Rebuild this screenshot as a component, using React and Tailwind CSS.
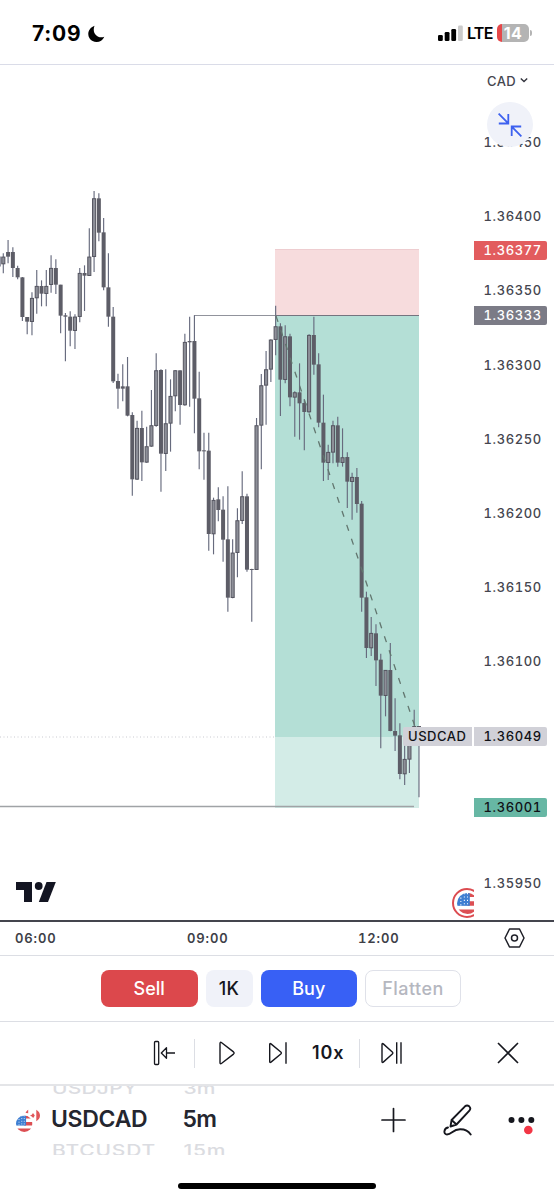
import React from 'react';

const STEP = 4.778;
const FIRST_X = 3.4;

// [high, open/close top, open/close bottom, low, rising]
const fromOrigin = (origin, rows) =>
  rows.map(([h, t, b, l, up]) => [origin + h / 3, origin + t / 3, origin + b / 3, origin + l / 3, up]);

const CANDLES = [
  ...fromOrigin(180, [
    [220, 230, 252, 280, 1], [180, 216, 230, 250, 0], [202, 216, 264, 291, 0], [257, 264, 292, 298, 0],
    [291, 292, 411, 423, 0], [411, 411, 425, 463, 0], [337, 354, 425, 466, 1], [270, 318, 354, 401, 1],
    [301, 318, 341, 379, 0], [270, 318, 341, 379, 1], [226, 264, 314, 338, 1], [238, 264, 314, 342, 0],
    [314, 314, 407, 460, 0], [399, 406, 410, 544, 0], [394, 410, 452, 499, 0], [403, 410, 452, 507, 1],
    [264, 279, 410, 427, 1], [256, 279, 287, 393, 0], [145, 230, 287, 287, 1], [33, 55, 230, 276, 1],
    [40, 55, 158, 184, 0], [114, 157, 322, 331, 0], [220, 322, 410, 440, 0], [381, 410, 604, 609, 0],
  ]),
  ...fromOrigin(280, [
    [281, 303, 326, 386, 0], [253, 319, 326, 364, 0], [231, 319, 407, 409, 0], [397, 405, 598, 647, 0],
    [422, 444, 598, 600, 1], [392, 444, 547, 603, 0], [440, 499, 547, 548, 1], [330, 436, 499, 500, 1],
    [220, 271, 437, 440, 1], [268, 270, 521, 635, 0], [268, 430, 521, 573, 1], [298, 348, 430, 515, 1],
    [271, 271, 348, 394, 1], [271, 271, 375, 434, 0], [161, 186, 375, 377, 1], [110, 183, 187, 380, 0],
    [106, 183, 356, 460, 0], [275, 355, 514, 568, 0], [458, 511, 514, 599, 0],
  ]),
  ...fromOrigin(400, [
    [98, 152, 402, 452, 0], [293, 300, 402, 463, 1], [262, 298, 330, 364, 0], [289, 329, 419, 485, 0],
    [259, 418, 593, 635, 0], [418, 458, 593, 595, 1], [325, 361, 458, 532, 1], [214, 289, 362, 372, 1],
    [281, 289, 509, 515, 0], [506, 507, 510, 665, 0], [54, 76, 509, 510, 1],
  ]),
  ...fromOrigin(240, [
    [402, 436, 556, 688, 1], [333, 388, 436, 554, 1], [298, 299, 388, 426, 1], [197, 259, 299, 346, 1],
    [250, 259, 419, 528, 0], [256, 289, 419, 430, 1], [281, 289, 472, 499, 0], [454, 457, 472, 590, 1],
    [370, 457, 490, 599, 0], [478, 489, 516, 631, 0], [283, 285, 516, 518, 1], [230, 285, 374, 404, 0],
    [340, 373, 548, 562, 0], [464, 548, 668, 723, 0], [614, 636, 668, 720, 1], [542, 556, 637, 670, 1],
    [530, 556, 668, 680, 0], [565, 652, 668, 680, 1],
  ]),
  ...fromOrigin(440, [
    [37, 51, 125, 204, 0], [98, 111, 125, 239, 1], [84, 111, 192, 218, 0], [183, 191, 473, 515, 0],
    [455, 472, 624, 654, 0], [531, 579, 624, 648, 1],
  ]),
  ...fromOrigin(620, [
    [13, 40, 121, 198, 0], [101, 119, 227, 385, 0], [150, 150, 227, 289, 1], [69, 150, 333, 334, 0],
    [235, 333, 347, 393, 0], [310, 346, 462, 478, 0], [376, 417, 462, 495, 1], [350, 352, 418, 459, 1],
    [269, 318, 350, 360, 0], [318, 318, 321, 532, 0],
  ]),
];

function Candle({ index, data }) {
  const [high, top, bottom, low, up] = data;
  const x = FIRST_X - 0.1 + index * STEP;
  const height = Math.max(bottom - top, 1);
  return (
    <g>
      <path d={`M${x} ${high}V${low}`} stroke="#676b7e" strokeWidth="1.15" />
      {up && height > 2 ? (
        <rect x={x - 1.55} y={top + 0.4} width="3.1" height={height - 0.6} fill="#8d8f98" stroke="#555560" strokeWidth="1" />
      ) : (
        <rect x={x - 2} y={top} width="4" height={height} fill="#5d5d67" />
      )}
    </g>
  );
}

function Chart() {
  return (
    <svg className="block" width="474" height="855" viewBox="0 65 474 855" fill="none">
      <path d="M0 737H406" stroke="#c9cad0" strokeWidth="1" strokeDasharray="1 2.5" />
      <rect x="275" y="249" width="144" height="66" fill="#f7dcdd" />
      <path d="M275 249.5H419" stroke="#eecdd0" />
      <rect x="275" y="316" width="144" height="421" fill="#b4dfd6" />
      <rect x="275" y="737" width="144" height="71" fill="#d3ece7" />
      <path d="M194 315.5H275" stroke="#91939c" strokeWidth="1.2" />
      <path d="M0 806.500H414" stroke="#a0a3a6" strokeWidth="1.5" />
      <path d="M0 256.500V266.500" stroke="#676b7e" strokeWidth="1.4" />
      {CANDLES.map((c, i) => (
        <Candle key={i} index={i} data={c} />
      ))}
      <path d="M275 315.500H419" stroke="#74747f" strokeWidth="1.2" />
      <path d="M276 316L417.500 734" stroke="#62766f" strokeWidth="1.3" strokeDasharray="6.200 8.500" />
    </svg>
  );
}

function Logo() {
  return (
    <svg width="40" height="20" viewBox="0 0 40 20" fill="#131522">
      <path d="M0 0H16V20H8V8H0Z" />
      <circle cx="22.700" cy="4" r="3.900" />
      <path d="M30.500 0H39.800L32 20H22.800Z" />
    </svg>
  );
}

function UsFlag({ size }) {
  return (
    <svg width={size} height={size} viewBox="0 0 18 18">
      <clipPath id={`us${size}`}><circle cx="9" cy="9" r="9" /></clipPath>
      <g clipPath={`url(#us${size})`}>
        <rect width="18" height="18" fill="#fff" />
        <path d="M9 0H18V3.400H9ZM9 7H18V11H9ZM0 14.200H18V18H0Z" fill="#dc4f53" />
        <rect width="11" height="11" fill="#3e7fd2" />
        <path d="M3.300 1V11M6.300 0V11M9 0V11" stroke="#fff" strokeWidth=".9" strokeDasharray="1 1.900" />
      </g>
    </svg>
  );
}

function StatusBar() {
  return (
    <header className="flex h-[65px] shrink-0 items-start justify-between border-b border-[#dadce8] pr-[22px] pl-[32px] text-black">
      <div className="flex items-center pt-[20px]">
        <span className="w-[55.500px] text-[21px] leading-[28px] font-bold tracking-[0.800px]">7:09</span>
        <svg width="17" height="18" viewBox="0 0 17 18"><path d="M6.500.7C.8 2.800-1.300 8.800 1.500 13.200C5 18.700 13.800 18.300 16.300 11.700C10 14.400 3.500 8.500 6.500.7Z" /></svg>
      </div>
      <div className="flex items-center pt-[19px]">
        <svg width="25" height="16" viewBox="0 0 25 16">
          <rect x="0" y="10" width="4.800" height="6" rx="1.300" />
          <rect x="6.700" y="7" width="4.800" height="9" rx="1.300" />
          <rect x="13.300" y="4" width="4.800" height="12" rx="1.300" />
          <rect x="20" y="0.500" width="4.800" height="15.500" rx="1.300" fill="#cbcbcb" />
        </svg>
        <span className="ml-[4px] w-[30px] text-[16px] leading-[28px] font-semibold tracking-[-0.700px]">LTE</span>
        <div className="flex h-[18.500px] w-[32px] items-center justify-center rounded-[5px] bg-[linear-gradient(90deg,#e5484a_0_5px,#b4b4b4_5px)] text-[16px] font-bold tracking-[0.300px] text-white">14</div>
        <div className="ml-[1px] h-[6px] w-[2px] rounded-r-full bg-[#b4b4b4]" />
      </div>
    </header>
  );
}

const PRICES = ['1.36450', '1.36400', '1.36350', '1.36300', '1.36250', '1.36200', '1.36150', '1.36100', '', '', '1.35950'];

function PriceAxis() {
  return (
    <div className="relative w-[80px] overflow-hidden text-[13px] text-[#45464f] tabular-nums">
      <div className="flex h-[41px] items-start gap-[4px] pt-[7px] pl-[13px]">
        <span className="text-[13px] leading-[18px] font-medium tracking-[0.400px]">CAD</span>
        <svg className="mt-[5px]" width="8" height="7" viewBox="0 0 8 7" fill="none" stroke="#33343d" strokeWidth="1.400"><path d="M.8 1.500L4 4.500L7.200 1.500" /></svg>
      </div>
      <div className="flex flex-col">
        {PRICES.map((p, i) => (
          <div key={i} className="flex h-[74.100px] items-center pl-[9.500px] font-medium tracking-[0.620px]">{p}</div>
        ))}
      </div>
      <button className="absolute top-[37px] left-[13px] flex h-[45px] w-[46px] items-center justify-center rounded-full bg-[#f0f2f9]">
        <svg width="24" height="24" viewBox="0 0 24 24" fill="none" stroke="#3d61ef" strokeWidth="1.800"><path d="M.6.600L10.300 10.300M10.300 1V10.500H.8M23.400 23.400L13.700 13.700M13.700 23V13.500H23.200" /></svg>
      </button>
      <div className="absolute top-[176px] left-0 flex h-[19px] w-[73px] items-center rounded-r-[2px] bg-[#e25c5e] pl-[9.500px] font-medium tracking-[0.620px] text-white">1.36377</div>
      <div className="absolute top-[241px] left-0 flex h-[19px] w-[73px] items-center rounded-r-[2px] bg-[#7b7b86] pl-[9.500px] font-medium tracking-[0.620px] text-white">1.36333</div>
      <div className="absolute top-[662px] left-0 flex h-[19px] w-[73px] items-center rounded-r-[2px] bg-[#d1d1d8] pl-[9.500px] font-medium tracking-[0.620px] text-[#101116]">1.36049</div>
      <div className="absolute top-[733px] left-0 flex h-[19px] w-[73px] items-center rounded-r-[2px] bg-[#67b7a4] pl-[9.500px] font-medium tracking-[0.620px] text-[#101116]">1.36001</div>
    </div>
  );
}

function TradeRow() {
  return (
    <div className="flex h-[66px] shrink-0 items-start gap-[8px] border-b border-[#dcdee4] pt-[13.500px] pl-[101px] text-[18px] font-medium">
      <button className="h-[37.500px] w-[96.500px] rounded-[8px] bg-[#dc484c] text-white">Sell</button>
      <button className="h-[37.500px] w-[47px] rounded-[8px] bg-[#f0f2f9] tracking-[0.400px] text-[#15161d]">1K</button>
      <button className="h-[37.500px] w-[96.500px] rounded-[8px] bg-[#3860f5] text-white">Buy</button>
      <button className="h-[37.500px] w-[96px] rounded-[8px] border border-[#dfe1e9] tracking-[0.450px] text-[#b5b7bf]">Flatten</button>
    </div>
  );
}

function ReplayRow() {
  return (
    <div className="flex h-[64px] shrink-0 items-center border-b-2 border-[#e4e5e8] pl-[153px] text-[#16171e]">
      <svg width="22" height="26" viewBox="0 0 22 26" fill="none" stroke="currentColor" strokeWidth="1.300"><rect x="1.500" y="1.500" width="4.200" height="23" rx="1" /><path d="M22 13H13M13.500 7.700V18.300L8.300 13Z" strokeLinejoin="round" /></svg>
      <div className="ml-[19px] h-[29px] w-px bg-[#dcdee4]" />
      <svg className="ml-[24px]" width="16" height="24" viewBox="0 0 16 24" fill="none" stroke="currentColor" strokeWidth="1.400"><path d="M1 2.500Q1 .5 2.700 1.700L14.500 10.900Q15.700 12 14.500 13.100L2.700 22.300Q1 23.500 1 21.500Z" /></svg>
      <svg className="ml-[33px]" width="20" height="24" viewBox="0 0 20 24" fill="none" stroke="currentColor" strokeWidth="1.400"><path d="M1.700 3.500Q1.700 2 3 2.900L12.800 11Q13.900 12 12.800 13L3 21.100Q1.700 22 1.700 20.500ZM18 1.200V22.800" /></svg>
      <span className="ml-[24px] w-[36px] text-[18px] leading-[28px] font-semibold tracking-[0.900px]">10x</span>
      <div className="ml-[11px] h-[29px] w-px bg-[#dcdee4]" />
      <svg className="ml-[20px]" width="23" height="24" viewBox="0 0 23 24" fill="none" stroke="currentColor" strokeWidth="1.400"><path d="M2 3.500Q2 2 3.300 2.900L12.300 11Q13.400 12 12.300 13L3.300 21.100Q2 22 2 20.500ZM16.700 1.200V22.800M21 1.200V22.800" /></svg>
      <svg className="ml-[94px]" width="22" height="22" viewBox="0 0 22 22" fill="none" stroke="currentColor" strokeWidth="1.600"><path d="M1 1L21 21M21 1L1 21" /></svg>
    </div>
  );
}

function SymbolRow() {
  return (
    <div className="flex h-[69px] shrink-0 overflow-hidden text-[22px] text-[#24262f]">
      <div className="flex w-[51px] items-center pl-[16px]">
        <svg width="25" height="24" viewBox="0 0 25 24">
          <path d="M9.500 4Q10.500 1.500 12.200.8V4.300Q11 3.800 9.500 4ZM20.300.700Q24 3 24 6.500Q24 10 20.300 12.300ZM14 6.500L15.800 5.800L17 4L18.800 6.500L17.200 9Q16 7 14 6.500Z" fill="#e0575a" />
          <g transform="translate(0 6.500)"><UsFlag size={16.5} /></g>
        </svg>
      </div>
      <div className="flex w-[131.500px] flex-col">
        <div className="-mt-[7px] h-[26px] origin-top scale-y-75 pl-px text-[21px] leading-[26px] font-medium tracking-[0.200px] text-[#dbdce1]"><span>USDJPY</span></div>
        <div className="h-[29px] text-[23px] leading-[29px] font-semibold tracking-[-0.300px]">USDCAD</div>
        <div className="h-[26px] origin-bottom scale-y-75 pl-px text-[21px] leading-[26px] font-medium tracking-[0.800px] text-[#dbdce1]"><span>BTCUSDT</span></div>
      </div>
      <div className="flex w-[197px] flex-col">
        <div className="-mt-[7px] h-[26px] origin-top scale-y-75 pl-px text-[21px] leading-[26px] font-medium text-[#dbdce1]">3m</div>
        <div className="h-[29px] text-[23px] leading-[29px] font-semibold tracking-[-0.600px]">5m</div>
        <div className="h-[26px] origin-bottom scale-y-75 pl-px text-[21px] leading-[26px] font-medium tracking-[0.800px] text-[#dbdce1]">15m</div>
      </div>
      <div className="flex items-center pb-[2px]">
        <svg width="26" height="26" viewBox="0 0 26 26" fill="none" stroke="#16171e" strokeWidth="1.700" strokeLinecap="round"><path d="M13.500 1.500V24.500M2 13H25" /></svg>
        <svg className="ml-[37px]" width="30" height="32" viewBox="0 0 30 32" fill="none" stroke="#16171e" strokeWidth="1.900" strokeLinejoin="round" strokeLinecap="round">
          <path d="M7.500 22.500L8.600 16L22 2.300Q24 .500 26.200 2.300Q28.300 4.500 26.400 6.600L13.500 20.500ZM8.600 16L13.500 20.500M5 23.500C.5 24.500.3 30.500 4 30.500C9 30.500 9.500 25.500 17 25.300C23 25.200 25.500 27 27.700 30.500" />
        </svg>
        <svg className="mt-[10px] ml-[35px]" width="28" height="21" viewBox="0 0 28 21" fill="#16171e"><circle cx="3.500" cy="6" r="3" /><circle cx="13.400" cy="6" r="3" /><circle cx="23.300" cy="6" r="3" /><circle cx="20.300" cy="16" r="4.300" fill="#f23645" /></svg>
      </div>
    </div>
  );
}

export default function App() {
  return (
    <div className="flex h-[1200px] w-[554px] flex-col overflow-hidden bg-white font-['Inter',sans-serif]">
      <StatusBar />
      <main className="relative flex h-[855px] shrink-0">
        <div className="relative w-[474px] overflow-hidden">
          <Chart />
          <div className="absolute top-[816.500px] left-[16px]"><Logo /></div>
          <div className="absolute top-[823px] left-[452px] flex h-[30px] w-[30px] items-center justify-center rounded-full border-[2px] border-[#dc4b50] bg-white"><UsFlag size={21} /></div>
          <div className="absolute top-[662px] left-[403px] flex h-[19px] w-[69px] items-center rounded-l-[2px] bg-[#d1d1d8] pl-[5px] text-[13px] font-medium tracking-[0.550px] text-[#101116]">USDCAD</div>
        </div>
        <PriceAxis />
      </main>
      <div className="flex h-[36px] shrink-0 border-t-2 border-b border-t-[#44454e] border-b-[#dcdee4] text-[13px] leading-[32px] font-semibold text-[#3e3f48] tabular-nums">
        <span className="w-[172px] pl-[15px] tracking-[0.900px]">06:00</span>
        <span className="w-[172px] pl-[15px] tracking-[0.900px]">09:00</span>
        <span className="w-[160px] pl-[14px] tracking-[0.900px]">12:00</span>
        <svg className="mt-[6px]" width="21" height="20" viewBox="0 0 21 20" fill="none" stroke="#202129" strokeWidth="1.500"><path d="M5.500 1H15.500L20 10L15.500 19H5.500L1 10Z" strokeLinejoin="round" /><circle cx="10.500" cy="10" r="3" /></svg>
      </div>
      <TradeRow />
      <ReplayRow />
      <SymbolRow />
      <div className="mt-[28px] ml-[178px] h-[6px] w-[198px] rounded-full bg-black" />
    </div>
  );
}
